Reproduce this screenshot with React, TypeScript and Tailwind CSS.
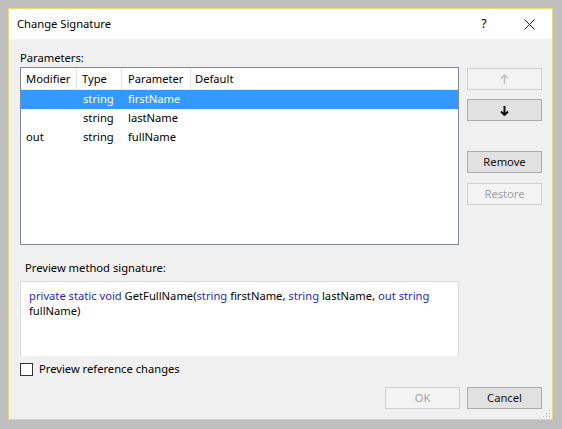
import React from 'react';

const font = { fontFamily: '"Segoe UI", "Noto Sans", "Liberation Sans", sans-serif' };

const rows = [
  { modifier: '', type: 'string', name: 'firstName', selected: true },
  { modifier: '', type: 'string', name: 'lastName', selected: false },
  { modifier: 'out', type: 'string', name: 'fullName', selected: false },
];

const Arrow: React.FC<{ dir: 'up' | 'down'; disabled?: boolean }> = ({ dir, disabled }) => (
  <svg width="9" height="11" viewBox="0 0 9 11" className={dir === 'up' ? '' : 'rotate-180'}>
    <path
      d="M4.5 1 L4.5 10 M1 4.5 L4.5 1 L8 4.5"
      stroke={disabled ? '#bcbcbc' : '#111'}
      strokeWidth={disabled ? 1.3 : 2}
      fill="none"
    />
  </svg>
);

const Btn: React.FC<{ disabled?: boolean; children: React.ReactNode; className?: string }> = ({ disabled, children, className }) => (
  <div
    className={`flex h-[22px] w-[75px] items-center justify-center border ${
      disabled ? 'border-[#cfcfcf] bg-[#f3f3f3] text-[#a3a3a3]' : 'border-[#adadad] bg-[#e1e1e1] text-[#111]'
    } ${className ?? ''}`}
  >
    {children}
  </div>
);

export default function App() {
  return (
    <div className="h-[429px] w-[562px] bg-[#bfbfbf] p-[8px] pb-[9px] pr-[9px] text-[11.2px]" style={font}>
      <div className="relative flex h-full w-full flex-col border border-[#e8d97a] bg-[#f0f0f0]">
        {/* title bar */}
        <div className="flex h-[30px] items-center bg-white pl-[8px] text-black">
          <span className="flex-1">Change Signature</span>
          <span className="w-[30px] text-center text-[12.5px]">?</span>
          <span className="ml-[15px] flex w-[30px] justify-center">
            <svg width="11" height="11" viewBox="0 0 11 11">
              <path d="M0.5 0.5 L10.5 10.5 M10.5 0.5 L0.5 10.5" stroke="#222" strokeWidth="1" />
            </svg>
          </span>
          <span className="w-[8px]" />
        </div>

        {/* body */}
        <div className="flex flex-1 flex-col pl-[11px] pr-[10px] pt-[10px] text-black">
          <div className="h-[18px] leading-[18px]">Parameters:</div>
          <div className="flex justify-between">
            {/* list */}
            <div className="h-[178px] w-[439px] border border-[#828790] bg-white">
              <div className="flex h-[22px] items-center border-b border-[#ececec] bg-white">
                <div className="w-[56px] border-r border-[#e5e5e5] pl-[5px] leading-[22px]">Modifier</div>
                <div className="w-[45px] border-r border-[#e5e5e5] pl-[5px] leading-[22px]">Type</div>
                <div className="w-[69px] border-r border-[#e5e5e5] pl-[6px] leading-[22px]">Parameter</div>
                <div className="pl-[4px] leading-[22px]">Default</div>
              </div>
              {rows.map((r) => (
                <div
                  key={r.name}
                  className={`flex h-[19px] items-center ${r.selected ? 'bg-[#3399ff] text-white' : 'text-black'}`}
                >
                  <div className="w-[56px] pl-[5px]">{r.modifier}</div>
                  <div className="w-[45px] pl-[6px]">{r.type}</div>
                  <div className="w-[69px] pl-[6px]">{r.name}</div>
                </div>
              ))}
            </div>
            {/* side buttons */}
            <div className="flex flex-col pt-[1px]">
              <Btn disabled>
                <Arrow dir="up" disabled />
              </Btn>
              <Btn className="mt-[9px]">
                <Arrow dir="down" />
              </Btn>
              <Btn className="mt-[30px]">Remove</Btn>
              <Btn disabled className="mt-[10px]">
                Restore
              </Btn>
            </div>
          </div>

          <div className="mt-[14px] pl-[5px] leading-[18px]">Preview method signature:</div>
          <div className="mt-[4px] h-[75px] w-[439px] border-x border-t border-[#dcdcdc] bg-white px-[8px] pt-[6px] leading-[15px]">
            <div className="whitespace-nowrap">
              <span className="text-[#1f1fd6]">private static void</span> GetFullName(
              <span className="text-[#1f1fd6]">string</span> firstName, <span className="text-[#1f1fd6]">string</span>{' '}
              lastName, <span className="text-[#1f1fd6]">out string</span>
            </div>
            <div>fullName)</div>
          </div>

          <div className="mt-[5px] flex h-[16px] items-center">
            <div className="h-[13px] w-[13px] border border-[#333] bg-white" />
            <span className="ml-[6px]">Preview reference changes</span>
          </div>

          <div className="mt-[10px] flex justify-end gap-[7px]">
            <Btn disabled className="h-[21px] w-[73px]">
              OK
            </Btn>
            <Btn className="h-[21px] w-[74px]">Cancel</Btn>
          </div>
        </div>

        {/* size grip */}
        <svg className="absolute bottom-[1px] right-[1px]" width="10" height="10" viewBox="0 0 10 10">
          {[
            [8, 2], [8, 5], [5, 5], [8, 8], [5, 8], [2, 8],
          ].map(([x, y], i) => (
            <rect key={i} x={x} y={y} width="1" height="1" fill="#b8b8b8" />
          ))}
        </svg>
      </div>
    </div>
  );
}
